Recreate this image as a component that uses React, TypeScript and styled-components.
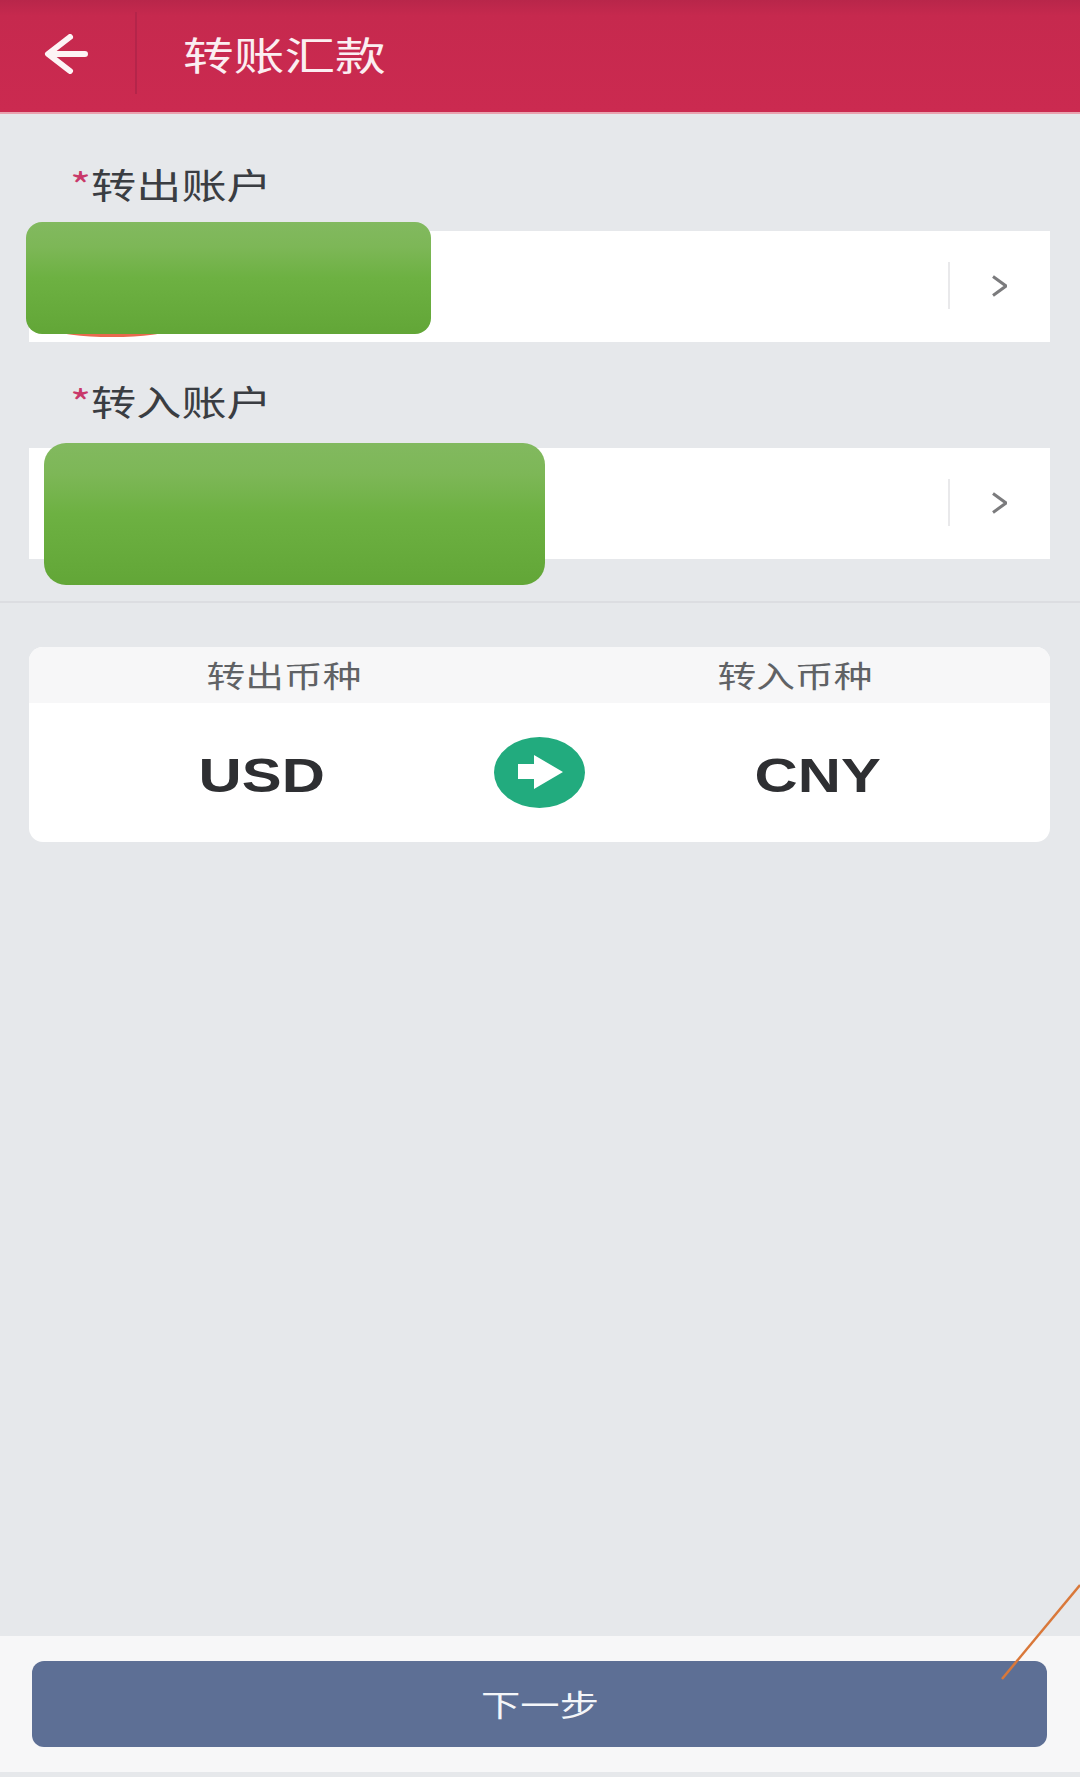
import React from "react";
import styled, { createGlobalStyle } from "styled-components";

const GlobalStyle = createGlobalStyle`
  html, body {
    margin: 0;
    padding: 0;
    background: #fff;
  }
  body {
    font-family: "Noto Sans CJK SC", "Liberation Sans", sans-serif;
  }
`;

const Page = styled.div`
  position: relative;
  width: 1080px;
  height: 1777px;
  overflow: hidden;
  display: flex;
  flex-direction: column;
  background: #e6e8eb;
`;

const Header = styled.header`
  height: 112px;
  flex: none;
  display: flex;
  align-items: center;
  background: linear-gradient(180deg, #b8264a 0%, #c6294e 14%, #cb2a50 100%);
  border-bottom: 2px solid #e9a3b0;
`;

const BackButton = styled.div`
  width: 137px;
  height: 82px;
  margin-top: -6px;
  flex: none;
  display: flex;
  align-items: center;
  padding: 2px 0 0 43px;
  box-sizing: border-box;
  border-right: 2px solid #b4254a;
`;

// the screenshot is stretched sideways, so the text is too
const Stretch = styled.span<{ $x: number; $origin?: string }>`
  display: inline-block;
  white-space: nowrap;
  transform: scaleX(${(p) => p.$x});
  transform-origin: ${(p) => p.$origin || "left"} center;
`;

const Title = styled.h1`
  margin: -6px 0 0 46px;
  font-size: 39px;
  line-height: 50px;
  font-weight: 400;
  color: #fbeef1;
`;

const Accounts = styled.section`
  flex: none;
  padding: 0 30px 42px 29px;
  border-bottom: 2px solid #dcdde1;
`;

const Label = styled.div<{ $height: number }>`
  height: ${(p) => p.$height}px;
  padding-left: 41px;
  box-sizing: border-box;
  display: flex;
  align-items: flex-end;
  padding-bottom: 26px;
  font-size: 35px;
  line-height: 42px;
  color: #3a3d42;
`;

const Star = styled.span`
  color: #c9386a;
`;

const AccountRow = styled.div`
  position: relative;
  height: 111px;
  box-sizing: border-box;
  padding: 0 43px 2px 0;
  display: flex;
  align-items: center;
  justify-content: flex-end;
  background: #fff;
`;

const RowDivider = styled.div`
  width: 2px;
  height: 47px;
  margin-right: 42px;
  background: #e9e9eb;
`;

const RedMark = styled.div`
  position: absolute;
  left: 26px;
  top: 91px;
  width: 114px;
  height: 15px;
  border-radius: 50%;
  background: #e8694e;
`;

const Redaction = styled.div<{ $left: number; $top: number; $w: number; $h: number; $r: number }>`
  position: absolute;
  left: ${(p) => p.$left}px;
  top: ${(p) => p.$top}px;
  width: ${(p) => p.$w}px;
  height: ${(p) => p.$h}px;
  border-radius: ${(p) => p.$r}px;
  background: linear-gradient(180deg, #82b95f 0%, #7db757 22%, #6db142 50%, #62a637 100%);
`;

const CurrencyCard = styled.section`
  flex: none;
  margin: 44px 30px 0 29px;
  height: 195px;
  border-radius: 14px;
  overflow: hidden;
  background: #fff;
`;

const CardHead = styled.div`
  height: 56px;
  padding-bottom: 2px;
  box-sizing: border-box;
  display: grid;
  grid-template-columns: 1fr 1fr;
  align-items: center;
  justify-items: center;
  background: #f7f7f8;
  font-size: 30px;
  line-height: 40px;
  color: #606265;
`;

const CardBody = styled.div`
  height: 139px;
  display: grid;
  grid-template-columns: 1fr 91px 1fr;
  align-items: center;
  justify-items: center;
`;

const Currency = styled.div`
  margin-top: 5px;
  font-family: "Liberation Sans", sans-serif;
  font-size: 49px;
  font-weight: 700;
  line-height: 56px;
  color: #2e2f32;
`;

const Spacer = styled.div`
  flex: 1;
`;

const Footer = styled.footer`
  flex: none;
  height: 136px;
  margin-bottom: 5px;
  box-sizing: border-box;
  padding: 25px 33px 0 32px;
  background: #f7f7f8;
`;

const NextButton = styled.button`
  display: flex;
  align-items: center;
  justify-content: center;
  width: 100%;
  height: 86px;
  border: 0;
  border-radius: 12px;
  padding: 0 0 2px;
  background: #5d6f95;
  font-family: inherit;
  font-size: 30px;
  line-height: 40px;
  color: #f4f6f9;
`;

const Annotation = styled.svg`
  position: absolute;
  right: 0;
  bottom: 97px;
  pointer-events: none;
`;

function Chevron() {
  return (
    <svg width="15" height="22" viewBox="0 0 15 22" fill="none">
      <polyline points="1,1.5 14,11 1,20.5" stroke="#7b7b7d" strokeWidth="3" />
    </svg>
  );
}

function BackArrow() {
  return (
    <svg width="48" height="40" viewBox="0 0 48 40" fill="none">
      <path
        d="M42 20H6M27 3L5 20L27 37"
        stroke="#fdf3f5"
        strokeWidth="6"
        strokeLinecap="round"
        strokeLinejoin="round"
      />
    </svg>
  );
}

function SwapArrow() {
  return (
    <svg width="91" height="71" viewBox="0 0 91 71">
      <ellipse cx="45.5" cy="35.5" rx="45.5" ry="35.5" fill="#22ab7e" />
      <path d="M24 27H40V18L69 35L40 52V42H24Z" fill="#fff" />
    </svg>
  );
}

export default function App() {
  return (
    <Page>
      <GlobalStyle />
      <Header>
        <BackButton>
          <BackArrow />
        </BackButton>
        <Title>
          <Stretch $x={1.3}>转账汇款</Stretch>
        </Title>
      </Header>

      <Accounts>
        <Label $height={117}>
          <Stretch $x={1.29}>
            <Star>*</Star>转出账户
          </Stretch>
        </Label>
        <AccountRow>
          <RedMark />
          <Redaction $left={-3} $top={-9} $w={405} $h={112} $r={16} />
          <RowDivider />
          <Chevron />
        </AccountRow>
        <Label $height={106}>
          <Stretch $x={1.29}>
            <Star>*</Star>转入账户
          </Stretch>
        </Label>
        <AccountRow>
          <Redaction $left={15} $top={-5} $w={501} $h={142} $r={22} />
          <RowDivider />
          <Chevron />
        </AccountRow>
      </Accounts>

      <CurrencyCard>
        <CardHead>
          <Stretch $x={1.29} $origin="center">转出币种</Stretch>
          <Stretch $x={1.29} $origin="center">转入币种</Stretch>
        </CardHead>
        <CardBody>
          <Currency>
            <Stretch $x={1.22} $origin="center">USD</Stretch>
          </Currency>
          <SwapArrow />
          <Currency>
            <Stretch $x={1.22} $origin="center">CNY</Stretch>
          </Currency>
        </CardBody>
      </CurrencyCard>

      <Spacer />

      <Footer>
        <NextButton>
          <Stretch $x={1.31} $origin="center">下一步</Stretch>
        </NextButton>
      </Footer>

      <Annotation width="80" height="96" viewBox="0 0 80 96" fill="none">
        <line x1="80" y1="1" x2="2" y2="95" stroke="#d9783a" strokeWidth="2.5" />
      </Annotation>
    </Page>
  );
}
